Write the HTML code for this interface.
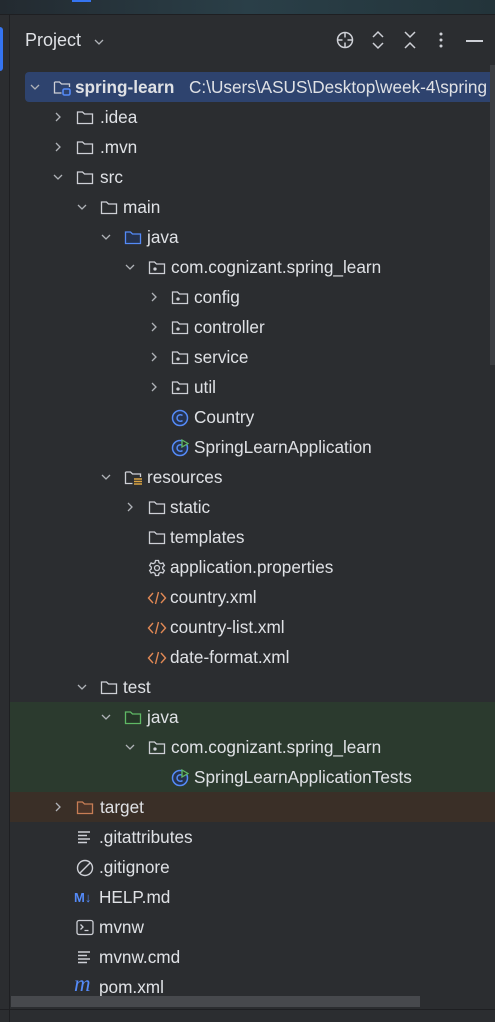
<!DOCTYPE html><html><head><meta charset="utf-8"><style>
body{margin:0;width:495px;height:1022px;background:#2b2d30;font-family:"Liberation Sans","DejaVu Sans",sans-serif;color:#dfe1e5;overflow:hidden;position:relative}
.top{position:absolute;left:0;top:0;width:495px;height:14px;background:linear-gradient(90deg,#232a30,#2a3f48 50%,#23343a);border-bottom:1px solid #1e1f22}
.side{position:absolute;left:0;top:15px;width:9px;height:1007px;background:#2b2d30;border-right:1px solid #1e1f22}
.r{position:absolute;left:10px;right:0;height:30px;font-size:17.2px;line-height:31px;white-space:nowrap}
.r span.t{position:absolute}
.ch{position:absolute;top:9px}
.ic{position:absolute;top:7px}
</style></head><body>
<div class="top"><div style="position:absolute;left:72px;top:0;width:19px;height:2px;background:#3574f0"></div></div>
<div class="side"><div style="position:absolute;left:0;top:12px;width:3px;height:44px;background:#3574f0;border-radius:0 3px 3px 0"></div></div>
<div style="position:absolute;left:25px;top:30px;font-size:18px">Project</div>
<svg style="position:absolute;left:93px;top:37px" width="12" height="10"><path d="M2 3l4 4 4-4" stroke="#b0b3b8" stroke-width="1.3" fill="none"/></svg>
<svg style="position:absolute;left:335px;top:30px" width="20" height="20" fill="none" stroke="#ced0d6" stroke-width="1.5"><circle cx="10" cy="10" r="7.5"/><path d="M10 2.5v5M10 12.5v5M2.5 10h5M12.5 10h5"/></svg>
<svg style="position:absolute;left:370px;top:30px" width="16" height="20" fill="none" stroke="#ced0d6" stroke-width="1.5"><path d="M3 7l5-5 5 5M3 13l5 5 5-5"/></svg>
<svg style="position:absolute;left:402px;top:30px" width="16" height="20" fill="none" stroke="#ced0d6" stroke-width="1.5"><path d="M3 2l5 5 5-5M3 18l5-5 5 5"/></svg>
<svg style="position:absolute;left:437px;top:31px" width="8" height="18" fill="#ced0d6"><circle cx="4" cy="3" r="1.5"/><circle cx="4" cy="9" r="1.5"/><circle cx="4" cy="15" r="1.5"/></svg>
<div style="position:absolute;left:466px;top:40px;width:17px;height:1.6px;background:#ced0d6"></div>

<div style="position:absolute;left:25px;top:72px;width:475px;height:30px;background:#2e436e;border-radius:4px"></div>
<div style="position:absolute;left:10px;top:702px;width:485px;height:90px;background:#2b3a2e"></div>
<div style="position:absolute;left:10px;top:792px;width:485px;height:30px;background:#3a2f27"></div>

<div class="r" style="top:72px"><svg class="ch" style="left:19px" width="12" height="12"><path d="M2 4l4 4 4-4" stroke="#b0b3b8" stroke-width="1.3" fill="none"/></svg><svg class="ic" style="left:43px" width="20" height="18" fill="none" stroke="#ced0d6" stroke-width="1.3"><path d="M1.5 3h5l2 2h8v3M1.5 3v11h7"/><rect x="10" y="10" width="7" height="6" rx="1.5" stroke="#548af7" stroke-width="1.6"/></svg><span class="t" style="left:65px;font-weight:bold">spring-learn</span><span class="t" style="left:179px">C:\Users\ASUS\Desktop\week-4\spring</span></div>

<div class="r" style="top:102px"><svg class="ch" style="left:42px" width="12" height="12"><path d="M4 2l4 4-4 4" stroke="#b0b3b8" stroke-width="1.3" fill="none"/></svg><svg class="ic" style="left:66px" width="18" height="16" fill="none" stroke="#ced0d6" stroke-width="1.3"><path d="M1.5 3h5l2 2h8v9.5h-15z"/></svg><span class="t" style="left:90px">.idea</span></div>
<div class="r" style="top:132px"><svg class="ch" style="left:42px" width="12" height="12"><path d="M4 2l4 4-4 4" stroke="#b0b3b8" stroke-width="1.3" fill="none"/></svg><svg class="ic" style="left:66px" width="18" height="16" fill="none" stroke="#ced0d6" stroke-width="1.3"><path d="M1.5 3h5l2 2h8v9.5h-15z"/></svg><span class="t" style="left:90px">.mvn</span></div>
<div class="r" style="top:162px"><svg class="ch" style="left:42px" width="12" height="12"><path d="M2 4l4 4 4-4" stroke="#b0b3b8" stroke-width="1.3" fill="none"/></svg><svg class="ic" style="left:66px" width="18" height="16" fill="none" stroke="#ced0d6" stroke-width="1.3"><path d="M1.5 3h5l2 2h8v9.5h-15z"/></svg><span class="t" style="left:90px">src</span></div>
<div class="r" style="top:192px"><svg class="ch" style="left:66px" width="12" height="12"><path d="M2 4l4 4 4-4" stroke="#b0b3b8" stroke-width="1.3" fill="none"/></svg><svg class="ic" style="left:90px" width="18" height="16" fill="none" stroke="#ced0d6" stroke-width="1.3"><path d="M1.5 3h5l2 2h8v9.5h-15z"/></svg><span class="t" style="left:113px">main</span></div>
<div class="r" style="top:222px"><svg class="ch" style="left:90px" width="12" height="12"><path d="M2 4l4 4 4-4" stroke="#b0b3b8" stroke-width="1.3" fill="none"/></svg><svg class="ic" style="left:114px" width="18" height="16" fill="#25324d" stroke="#548af7" stroke-width="1.3"><path d="M1.5 3h5l2 2h8v9.5h-15z"/></svg><span class="t" style="left:137px">java</span></div>
<div class="r" style="top:252px"><svg class="ch" style="left:114px" width="12" height="12"><path d="M2 4l4 4 4-4" stroke="#b0b3b8" stroke-width="1.3" fill="none"/></svg><svg class="ic" style="left:138px" width="18" height="16" fill="none" stroke="#ced0d6" stroke-width="1.3"><path d="M1.5 3h5l2 2h8v9.5h-15z"/><circle cx="7" cy="10" r="1" fill="#ced0d6"/></svg><span class="t" style="left:161px">com.cognizant.spring_learn</span></div>
<div class="r" style="top:282px"><svg class="ch" style="left:138px" width="12" height="12"><path d="M4 2l4 4-4 4" stroke="#b0b3b8" stroke-width="1.3" fill="none"/></svg><svg class="ic" style="left:161px" width="18" height="16" fill="none" stroke="#ced0d6" stroke-width="1.3"><path d="M1.5 3h5l2 2h8v9.5h-15z"/><circle cx="7" cy="10" r="1" fill="#ced0d6"/></svg><span class="t" style="left:184px">config</span></div>
<div class="r" style="top:312px"><svg class="ch" style="left:138px" width="12" height="12"><path d="M4 2l4 4-4 4" stroke="#b0b3b8" stroke-width="1.3" fill="none"/></svg><svg class="ic" style="left:161px" width="18" height="16" fill="none" stroke="#ced0d6" stroke-width="1.3"><path d="M1.5 3h5l2 2h8v9.5h-15z"/><circle cx="7" cy="10" r="1" fill="#ced0d6"/></svg><span class="t" style="left:184px">controller</span></div>
<div class="r" style="top:342px"><svg class="ch" style="left:138px" width="12" height="12"><path d="M4 2l4 4-4 4" stroke="#b0b3b8" stroke-width="1.3" fill="none"/></svg><svg class="ic" style="left:161px" width="18" height="16" fill="none" stroke="#ced0d6" stroke-width="1.3"><path d="M1.5 3h5l2 2h8v9.5h-15z"/><circle cx="7" cy="10" r="1" fill="#ced0d6"/></svg><span class="t" style="left:184px">service</span></div>
<div class="r" style="top:372px"><svg class="ch" style="left:138px" width="12" height="12"><path d="M4 2l4 4-4 4" stroke="#b0b3b8" stroke-width="1.3" fill="none"/></svg><svg class="ic" style="left:161px" width="18" height="16" fill="none" stroke="#ced0d6" stroke-width="1.3"><path d="M1.5 3h5l2 2h8v9.5h-15z"/><circle cx="7" cy="10" r="1" fill="#ced0d6"/></svg><span class="t" style="left:184px">util</span></div>
<div class="r" style="top:402px"><svg class="ic" style="left:161px" width="18" height="18" fill="none" stroke="#548af7" stroke-width="1.5"><circle cx="9" cy="9" r="7.5" fill="#25324d"/><path d="M11.5 6.5a3.3 3.3 0 1 0 0 5"/></svg><span class="t" style="left:184px">Country</span></div>
<div class="r" style="top:432px"><svg class="ic" style="left:161px" width="18" height="18" fill="none" stroke="#548af7" stroke-width="1.5"><circle cx="9" cy="9" r="7.5" fill="#25324d"/><path d="M11.5 6.5a3.3 3.3 0 1 0 0 5"/><path d="M11 1l6 3.5-6 3.5z" fill="#2b2d30" stroke="#5fb865" stroke-width="1.3"/></svg><span class="t" style="left:184px">SpringLearnApplication</span></div>
<div class="r" style="top:462px"><svg class="ch" style="left:90px" width="12" height="12"><path d="M2 4l4 4 4-4" stroke="#b0b3b8" stroke-width="1.3" fill="none"/></svg><svg class="ic" style="left:114px" width="20" height="18" fill="none" stroke="#ced0d6" stroke-width="1.3"><path d="M1.5 3h5l2 2h8v3M1.5 3v11.5h7"/><path d="M10 10h8M10 12.5h8M10 15h8" stroke="#d9a343" stroke-width="1.5"/></svg><span class="t" style="left:137px">resources</span></div>
<div class="r" style="top:492px"><svg class="ch" style="left:114px" width="12" height="12"><path d="M4 2l4 4-4 4" stroke="#b0b3b8" stroke-width="1.3" fill="none"/></svg><svg class="ic" style="left:138px" width="18" height="16" fill="none" stroke="#ced0d6" stroke-width="1.3"><path d="M1.5 3h5l2 2h8v9.5h-15z"/></svg><span class="t" style="left:160px">static</span></div>
<div class="r" style="top:522px"><svg class="ic" style="left:138px" width="18" height="16" fill="none" stroke="#ced0d6" stroke-width="1.3"><path d="M1.5 3h5l2 2h8v9.5h-15z"/></svg><span class="t" style="left:160px">templates</span></div>
<div class="r" style="top:552px"><svg class="ic" style="left:138px" width="18" height="18" fill="none" stroke="#ced0d6" stroke-width="1.3"><circle cx="9" cy="9" r="2.5"/><path d="M7.5 1.5h3l.5 2.2 1.8 1 2.1-.8 1.5 2.6-1.7 1.5v2l1.7 1.5-1.5 2.6-2.1-.8-1.8 1-.5 2.2h-3l-.5-2.2-1.8-1-2.1.8-1.5-2.6 1.7-1.5v-2L1.6 6.5l1.5-2.6 2.1.8 1.8-1z"/></svg><span class="t" style="left:160px">application.properties</span></div>
<div class="r" style="top:582px"><svg class="ic" style="left:137px" width="20" height="18" fill="none" stroke="#e08855" stroke-width="1.4"><path d="M6 4L1.5 9 6 14M14 4l4.5 5L14 14M11.5 3l-3 12"/></svg><span class="t" style="left:160px">country.xml</span></div>
<div class="r" style="top:612px"><svg class="ic" style="left:137px" width="20" height="18" fill="none" stroke="#e08855" stroke-width="1.4"><path d="M6 4L1.5 9 6 14M14 4l4.5 5L14 14M11.5 3l-3 12"/></svg><span class="t" style="left:160px">country-list.xml</span></div>
<div class="r" style="top:642px"><svg class="ic" style="left:137px" width="20" height="18" fill="none" stroke="#e08855" stroke-width="1.4"><path d="M6 4L1.5 9 6 14M14 4l4.5 5L14 14M11.5 3l-3 12"/></svg><span class="t" style="left:160px">date-format.xml</span></div>
<div class="r" style="top:672px"><svg class="ch" style="left:66px" width="12" height="12"><path d="M2 4l4 4 4-4" stroke="#b0b3b8" stroke-width="1.3" fill="none"/></svg><svg class="ic" style="left:90px" width="18" height="16" fill="none" stroke="#ced0d6" stroke-width="1.3"><path d="M1.5 3h5l2 2h8v9.5h-15z"/></svg><span class="t" style="left:113px">test</span></div>
<div class="r" style="top:702px"><svg class="ch" style="left:90px" width="12" height="12"><path d="M2 4l4 4 4-4" stroke="#b0b3b8" stroke-width="1.3" fill="none"/></svg><svg class="ic" style="left:114px" width="18" height="16" fill="#253627" stroke="#5fb865" stroke-width="1.3"><path d="M1.5 3h5l2 2h8v9.5h-15z"/></svg><span class="t" style="left:137px">java</span></div>
<div class="r" style="top:732px"><svg class="ch" style="left:114px" width="12" height="12"><path d="M2 4l4 4 4-4" stroke="#b0b3b8" stroke-width="1.3" fill="none"/></svg><svg class="ic" style="left:138px" width="18" height="16" fill="none" stroke="#ced0d6" stroke-width="1.3"><path d="M1.5 3h5l2 2h8v9.5h-15z"/><circle cx="7" cy="10" r="1" fill="#ced0d6"/></svg><span class="t" style="left:161px">com.cognizant.spring_learn</span></div>
<div class="r" style="top:762px"><svg class="ic" style="left:161px" width="18" height="18" fill="none" stroke="#548af7" stroke-width="1.5"><circle cx="9" cy="9" r="7.5" fill="#25324d"/><path d="M11.5 6.5a3.3 3.3 0 1 0 0 5"/><path d="M11 1l6 3.5-6 3.5z" fill="#2b3a2e" stroke="#5fb865" stroke-width="1.3"/></svg><span class="t" style="left:184px">SpringLearnApplicationTests</span></div>
<div class="r" style="top:792px"><svg class="ch" style="left:42px" width="12" height="12"><path d="M4 2l4 4-4 4" stroke="#b0b3b8" stroke-width="1.3" fill="none"/></svg><svg class="ic" style="left:66px" width="18" height="16" fill="#4a3428" stroke="#c77d55" stroke-width="1.3"><path d="M1.5 3h5l2 2h8v9.5h-15z"/></svg><span class="t" style="left:90px">target</span></div>
<div class="r" style="top:822px"><svg class="ic" style="left:66px" width="18" height="16" stroke="#ced0d6" stroke-width="1.4"><path d="M2 3h12M2 6.5h9M2 10h12M2 13.5h9"/></svg><span class="t" style="left:89px">.gitattributes</span></div>
<div class="r" style="top:852px"><svg class="ic" style="left:66px" width="18" height="18" fill="none" stroke="#ced0d6" stroke-width="1.4"><circle cx="9" cy="9" r="7.5"/><path d="M4 14L14 4"/></svg><span class="t" style="left:89px">.gitignore</span></div>
<div class="r" style="top:882px"><span class="t" style="left:64px;font-size:13px;font-weight:bold;color:#548af7">M↓</span><span class="t" style="left:89px">HELP.md</span></div>
<div class="r" style="top:912px"><svg class="ic" style="left:66px" width="18" height="17" fill="none" stroke="#ced0d6" stroke-width="1.3"><rect x="1" y="1.5" width="16" height="14" rx="2"/><path d="M4.5 5.5l2.5 2.5-2.5 2.5M8.5 11.5h4"/></svg><span class="t" style="left:89px">mvnw</span></div>
<div class="r" style="top:942px"><svg class="ic" style="left:66px" width="18" height="16" stroke="#ced0d6" stroke-width="1.4"><path d="M2 3h12M2 6.5h9M2 10h12M2 13.5h9"/></svg><span class="t" style="left:89px">mvnw.cmd</span></div>
<div class="r" style="top:972px"><span class="t" style="left:64px;font-size:23px;font-style:italic;color:#548af7;top:-4px;font-family:'Liberation Serif',serif">m</span><span class="t" style="left:89px">pom.xml</span></div>

<div style="position:absolute;left:11px;top:996px;width:409px;height:11px;background:#47494d"></div>
<div style="position:absolute;left:490px;top:65px;width:5px;height:300px;background:#3c3e42"></div>
<div style="position:absolute;left:0;top:1009px;width:495px;height:1px;background:#1e1f22"></div>
</body></html>
